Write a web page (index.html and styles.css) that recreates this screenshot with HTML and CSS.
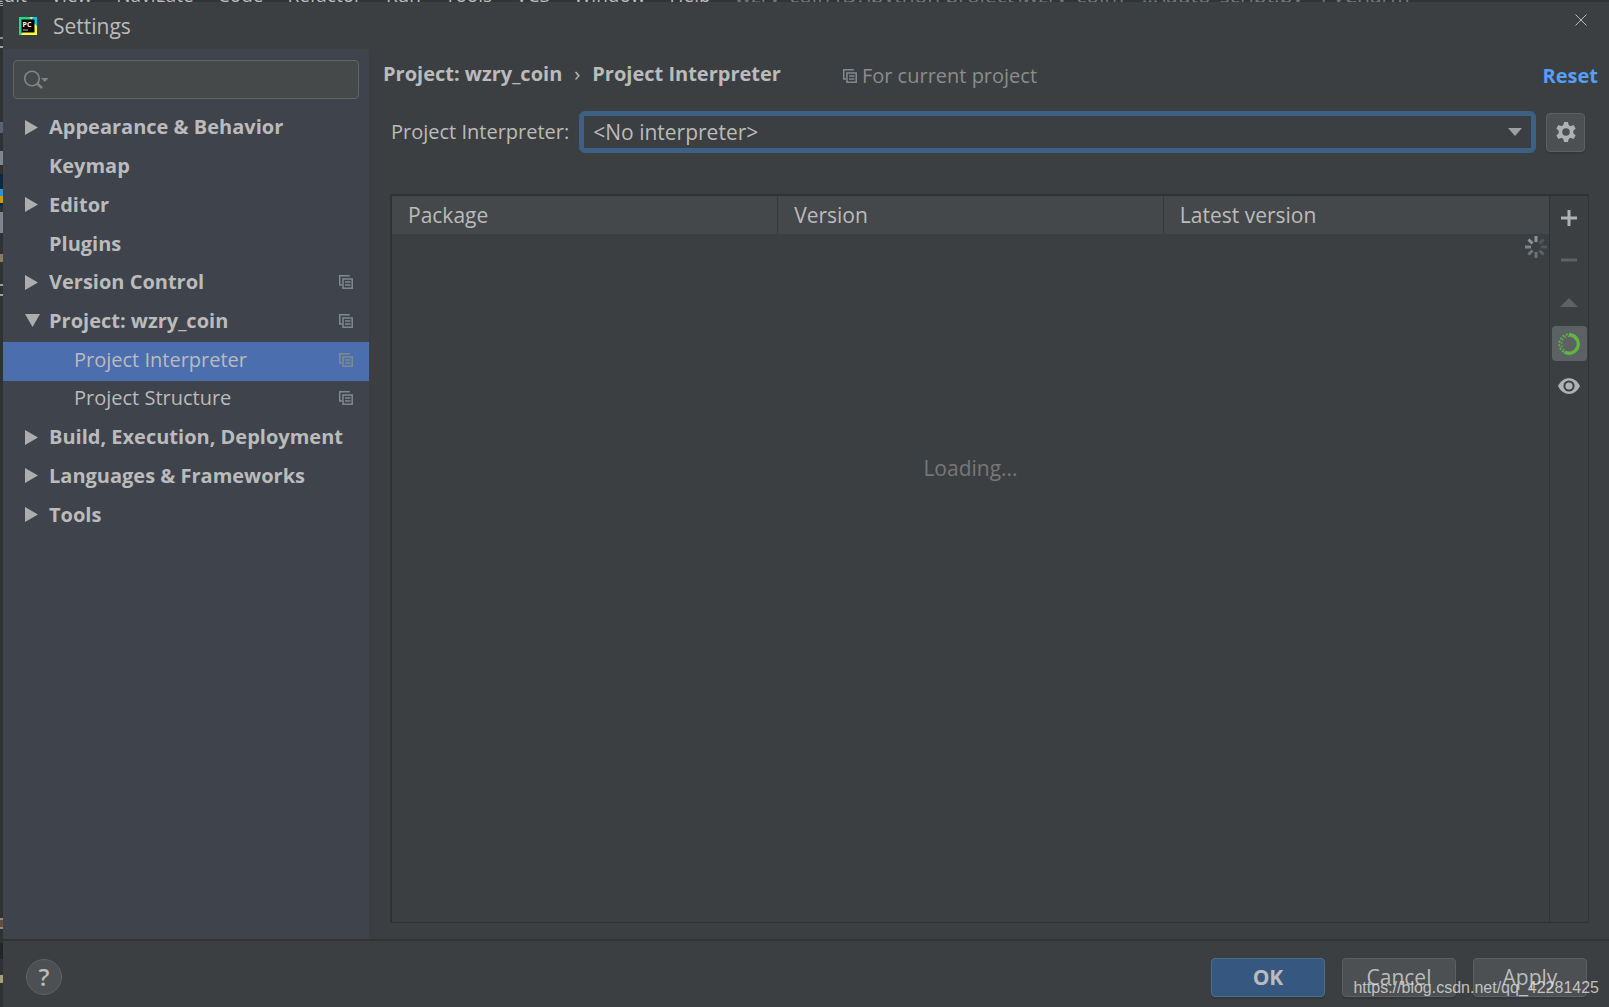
FILE: index.html
```html
<!DOCTYPE html>
<html lang="en">
<head>
<meta charset="utf-8">
<title>Settings</title>
<link rel="stylesheet" href="styles.css">
</head>
<body>
<svg class="defs" aria-hidden="true">
  <symbol id="copy" viewBox="0 0 14 14">
    <path d="M10 1.500V.75H.75V10H3" fill="none" stroke="currentColor" stroke-width="1.500"/>
    <rect x="4" y="4" width="9.200" height="9.200" fill="none" stroke="currentColor" stroke-width="1.500"/>
    <path d="M6 7h5.500M6 10h5.500" stroke="currentColor" stroke-width="1.300"/>
  </symbol>
  <symbol id="closed" viewBox="0 0 13 15"><path d="M0 0L13 7.500L0 15z" fill="currentColor"/></symbol>
  <symbol id="open" viewBox="0 0 15 13"><path d="M0 0H15L7.500 13z" fill="currentColor"/></symbol>
</svg>

<div class="desktop">
  <div class="menubar" aria-hidden="true">
    <div class="menus"><span>Edit</span><span>View</span><span>Navigate</span><span>Code</span><span>Refactor</span><span>Run</span><span>Tools</span><span>VCS</span><span>Window</span><span>Help</span><span class="path">wzry_coin [D:\python project\wzry_coin] - ...\auto_script.py - PyCharm</span></div>
  </div>
  <div class="edge" aria-hidden="true"></div>

  <main class="dialog">
    <header class="titlebar">
      <svg class="logo" viewBox="0 0 18 18" aria-hidden="true">
        <rect width="18" height="18" fill="#21d789"/>
        <path d="M10 0h8v14l-6-6z" fill="#07c3f2"/>
        <path d="M11 0h3l-2 3zM18 9v9H2l2-3h11V6z" fill="#fcf84a"/>
        <rect x="2.500" y="2.500" width="13" height="13" fill="#000"/>
        <path d="M4 13h5" stroke="#bbb"/>
        <text x="3.500" y="9.500" class="logo-text">PC</text>
      </svg>
      <h1>Settings</h1>
      <button class="close" aria-label="Close"><svg viewBox="0 0 12 12"><path d="M.5.5l11 11M11.500.5l-11 11" stroke="currentColor" fill="none"/></svg></button>
    </header>

    <div class="body">
      <aside class="sidebar">
        <div class="search">
          <svg viewBox="0 0 26 20" aria-hidden="true">
            <circle cx="8" cy="8.500" r="7.300" fill="none" stroke="currentColor" stroke-width="1.600"/>
            <path d="M13 13.500l5 4.500" stroke="currentColor" stroke-width="2.400"/>
            <path d="M17 8h7.500l-3.750 4z" fill="currentColor"/>
          </svg>
          <input type="text" aria-label="Search settings">
        </div>
        <ul class="tree">
          <li><svg class="arrow"><use href="#closed"/></svg><span>Appearance &amp; Behavior</span></li>
          <li><i class="arrow"></i><span>Keymap</span></li>
          <li><svg class="arrow"><use href="#closed"/></svg><span>Editor</span></li>
          <li><i class="arrow"></i><span>Plugins</span></li>
          <li><svg class="arrow"><use href="#closed"/></svg><span>Version Control</span><svg class="copy"><use href="#copy"/></svg></li>
          <li><svg class="arrow down"><use href="#open"/></svg><span>Project: wzry_coin</span><svg class="copy"><use href="#copy"/></svg></li>
          <li class="child selected"><span>Project Interpreter</span><svg class="copy"><use href="#copy"/></svg></li>
          <li class="child"><span>Project Structure</span><svg class="copy"><use href="#copy"/></svg></li>
          <li><svg class="arrow"><use href="#closed"/></svg><span>Build, Execution, Deployment</span></li>
          <li><svg class="arrow"><use href="#closed"/></svg><span>Languages &amp; Frameworks</span></li>
          <li><svg class="arrow"><use href="#closed"/></svg><span>Tools</span></li>
        </ul>
      </aside>

      <section class="content">
        <div class="crumbs">
          <h2><span>Project: wzry_coin</span><span class="sep">›</span><span>Project Interpreter</span></h2>
          <p class="scope"><svg class="copy"><use href="#copy"/></svg>For current project</p>
          <a class="reset" href="#">Reset</a>
        </div>
        <div class="picker">
          <label for="interpreter">Project Interpreter:</label>
          <div class="combo">
            <select id="interpreter"><option>&lt;No interpreter&gt;</option></select>
            <svg viewBox="0 0 14 8" aria-hidden="true"><path d="M0 0h14l-7 8z" fill="currentColor"/></svg>
          </div>
          <button class="gear" aria-label="Interpreter options">
            <svg viewBox="0 0 20 22"><path fill="currentColor" fill-rule="evenodd" d="M8 1h4l.6 3 2 1.200 3-1.200 2 3.600L17.300 9.800v2.400l2.300 2.200-2 3.600-3-1.200-2 1.200-.6 3H8l-.6-3-2-1.200-3 1.200-2-3.600 2.300-2.200V9.800L.4 7.600 2.400 4l3 1.200 2-1.200zM10 7.200a3.800 3.800 0 1 0 0 7.600 3.800 3.800 0 0 0 0-7.600z"/></svg>
          </button>
        </div>
        <div class="packages">
          <div class="list">
            <table>
              <thead><tr><th>Package</th><th>Version</th><th>Latest version</th></tr></thead>
            </table>
            <svg class="spinner" viewBox="-11 -11 22 22" aria-hidden="true">
              <g stroke="#8b9499" stroke-width="3">
                <path d="M0-5v-6"/><path d="M-3.500-3.500l-4-4"/>
                <path d="M-5 0h-6" stroke="#7b878a"/><path d="M-3.500 3.500l-4 4" stroke="#6d7679"/>
                <path d="M0 5v6" stroke="#687376"/><path d="M3.500 3.500l4 4" stroke="#5a6265"/>
                <path d="M5 0h6" stroke="#51575a"/><path d="M3.500-3.500l4-4" stroke="#51575a"/>
              </g>
            </svg>
            <p class="loading">Loading...</p>
          </div>
          <div class="tools">
            <button aria-label="Install"><svg viewBox="0 0 16 16"><path d="M8 0v16M0 8h16" stroke="#afb1b3" stroke-width="3"/></svg></button>
            <button aria-label="Uninstall" disabled><svg viewBox="0 0 16 16"><path d="M0 8h16" stroke="#5f6162" stroke-width="3"/></svg></button>
            <button aria-label="Upgrade" disabled><svg class="wide" viewBox="0 0 18 16"><path d="M0 13h18L9 4z" fill="#5f6162"/></svg></button>
            <button class="on" aria-label="Use Conda"><svg class="big" viewBox="-11 -11 22 22"><path d="M0-9.200A9.200 9.200 0 1 1-4.500 8" fill="none" stroke="#62b543" stroke-width="3.400"/><path d="M-5.500 8A9.700 9.700 0 0 1 0-9.700" fill="none" stroke="#62b543" stroke-width="1.800" stroke-dasharray="2 1.500"/><path d="M-4.600 6A7.800 7.800 0 0 1 0-7.800" fill="none" stroke="#62b543" stroke-width="1.500" stroke-dasharray="1.500 2"/></svg></button>
            <button aria-label="Show early releases"><svg class="big" viewBox="0 0 22 16"><path d="M0 8C5-2.500 17-2.500 22 8 17 18.500 5 18.500 0 8z" fill="#afb1b3"/><circle cx="11" cy="8" r="4.600" fill="none" stroke="#3c3f41" stroke-width="2"/></svg></button>
          </div>
        </div>
      </section>
    </div>

    <footer class="footer">
      <button class="help" aria-label="Help">?</button>
      <button class="btn primary">OK</button>
      <button class="btn">Cancel</button>
      <button class="btn">Apply</button>
    </footer>
  </main>
  <div class="watermark">https://blog.csdn.net/qq_42281425</div>
</div>
</body>
</html>
```
FILE: styles.css
```css
* { box-sizing: border-box; }
body {
  margin: 0;
  background: #3c3f41;
  color: #bbbbbb;
  font: 21px/28px "Open Sans", "Noto Sans", sans-serif;
}
h1, h2, p, ul { margin: 0; padding: 0; font-size: inherit; }
button, input, select { font: inherit; color: inherit; }
button { padding: 0; border: 0; background: none; }
svg { display: block; flex: none; }
.defs { position: absolute; width: 0; height: 0; }

.desktop {
  position: relative;
  display: grid;
  grid-template: 2px 1fr / 3px 1fr;
  height: 100vh;
  overflow: hidden;
}

/* The IDE window that shows past the dialog's top and left edges */
.menubar {
  grid-column: 1 / 3;
  display: flex;
  align-items: flex-end;
  overflow: hidden;
  background: #313437;
}
.menus {
  display: flex;
  gap: 24px;
  margin-left: -7px;
  font-size: 19px;
  line-height: 14px;
  white-space: nowrap;
}
.menus .path { color: #777777; font-size: 21px; }
.edge {
  background: linear-gradient(
    #2f3133 0 1px, #a0a0a0 1px 2px, #2f3133 2px 3px, #a0a0a0 3px 4px,
    #2f3133 4px 35px, #8a8a8a 35px 37px, #2f3133 37px 44px, #a0a0a0 44px 46px,
    #2f3133 46px 120px, #5a6370 120px 131px,
    #2f3133 131px 149px, #7d868c 149px 163px,
    #2f3133 163px 172px, #0b2a42 172px 187px, #3592c4 187px 194px, #c9a000 194px 201px, #0b2a42 201px 204px,
    #2f3133 204px 210px, #7d868c 210px 231px,
    #2f3133 231px 252px, #8a7a66 252px 260px,
    #2f3133 260px 282px, #a0a0a0 282px 284px, #2f3133 284px 292px, #a0a0a0 292px 294px,
    #2f3133 294px 916px, #8a8a8a 916px 918px, #6a4a3a 918px 925px, #8a8a8a 925px 927px,
    #2f3133 927px 941px, #232425 941px 957px,
    #2f3133 957px 973px, #a5a07a 973px 981px, #2f3133 981px);
}

.dialog { display: flex; flex-direction: column; min-height: 0; }
.titlebar {
  display: flex;
  align-items: center;
  height: 47px;
  padding: 0 22px 0 16px;
}
.titlebar h1 { flex: 1; margin-left: 16px; font-weight: 400; }
.logo { width: 18px; height: 18px; }
.logo-text { font: 700 7px "Open Sans", sans-serif; fill: #fff; }
.close { align-self: flex-start; margin-top: 12px; }
.close svg { width: 12px; height: 12px; }

.body { flex: 1; display: flex; min-height: 0; }
.sidebar { flex: none; width: 366px; background: #3e434c; }
.search {
  display: flex;
  align-items: center;
  height: 39px;
  margin: 11px 10px;
  padding: 0 10px;
  border: 1px solid #646464;
  border-radius: 4px;
  background: #45494a;
  color: #7b868d;
}
.search svg { width: 26px; height: 20px; }
.search input { flex: 1; min-width: 0; border: 0; outline: 0; background: none; }
.tree {
  display: grid;
  grid-template: repeat(11, 1fr) / minmax(0, 1fr);
  height: 426px;
  list-style: none;
  font-size: 20px;
  font-weight: 700;
}
.tree li { display: flex; align-items: center; padding: 0 16px 4px 22px; white-space: nowrap; }
.tree span { flex: 1; }
.tree .arrow { width: 13px; height: 15px; margin-right: 11px; color: #adadad; }
.tree .down { width: 15px; height: 13px; margin-right: 9px; }
.tree .child { padding-left: 71px; font-weight: 400; }
.tree .selected { background: #4b6eaf; }
.copy { width: 14px; height: 14px; color: #7f8b91; }

.content { flex: 1; display: flex; flex-direction: column; min-width: 0; padding-bottom: 16px; font-size: 20px; }
.crumbs { display: flex; align-items: center; height: 50px; padding: 4px 11px 0 14px; }
.crumbs h2 { display: flex; gap: 12px; padding-bottom: 4px; }
.sep { font-weight: 400; }
.scope { display: flex; align-items: center; gap: 5px; margin-left: 62px; color: #8c8c8c; }
.reset { margin-left: auto; color: #589df6; font-weight: 700; text-decoration: none; }
.picker { display: flex; align-items: center; height: 66px; padding: 0 24px 0 22px; }
.combo {
  position: relative;
  flex: 1;
  height: 42px;
  margin: 0 10px;
  border: 5px solid #3d6185;
  border-radius: 6px;
}
.combo select {
  display: block;
  width: 100%;
  height: 100%;
  padding: 0 9px;
  border: 0;
  outline: 0;
  appearance: none;
  background: #3c3f41;
  font-size: 21px;
}
.combo svg { position: absolute; right: 9px; top: 12px; width: 14px; height: 8px; color: #9da0a2; }
.gear {
  display: grid;
  place-items: center;
  width: 39px;
  height: 39px;
  border: 1px solid #5e6060;
  border-radius: 4px;
  background: #4c5052;
  color: #afb1b3;
  box-shadow: 0 2px 1px #35383a;
}
.gear svg { width: 20px; height: 22px; }

.packages {
  flex: 1;
  display: flex;
  min-height: 0;
  margin: 29px 20px 0 21px;
  border: 1px solid #323232;
  border-width: 2px 1px 1px 2px;
  font-size: 21px;
}
.list { position: relative; flex: 1; border-right: 1px solid #323232; }
table { width: 100%; border-collapse: collapse; table-layout: fixed; }
th {
  height: 38px;
  padding: 0 16px 1px;
  background: #45484a;
  border-right: 1px solid #36393b;
  font-weight: 400;
  text-align: left;
}
th:last-child { border-right: 0; }
.spinner { position: absolute; right: 2px; top: 40px; width: 22px; height: 22px; }
.loading { margin-top: 220px; text-align: center; color: #777777; }
.tools { display: flex; flex-direction: column; align-items: center; gap: 7px; width: 38px; padding-top: 4px; }
.tools button { display: grid; place-items: center; width: 35px; height: 35px; border-radius: 4px; }
.tools .on { background: #5c6164; }
.tools svg { width: 16px; height: 16px; }
.tools .wide { width: 18px; }
.tools .big { width: 22px; height: 22px; }

.footer {
  display: flex;
  align-items: center;
  gap: 17px;
  height: 68px;
  padding: 6px 22px 0 23px;
  border-top: 2px solid #323232;
}
.help {
  width: 36px;
  height: 36px;
  margin-right: auto;
  border: 1px solid #5e6263;
  border-radius: 50%;
  background: #4c5052;
  font-size: 24px;
  font-weight: 600;
}
.btn {
  width: 114px;
  height: 39px;
  border: 1px solid #5e6060;
  border-radius: 4px;
  background: #4c5052;
  box-shadow: 0 2px 1px #35383a;
}
.primary { border-color: #4c708c; background: #365880; font-weight: 700; }
.watermark {
  position: absolute;
  right: 10px;
  bottom: 5px;
  color: rgba(225, 225, 225, .8);
  font: 16px/28px "Liberation Sans", Arial, sans-serif;
}
```
